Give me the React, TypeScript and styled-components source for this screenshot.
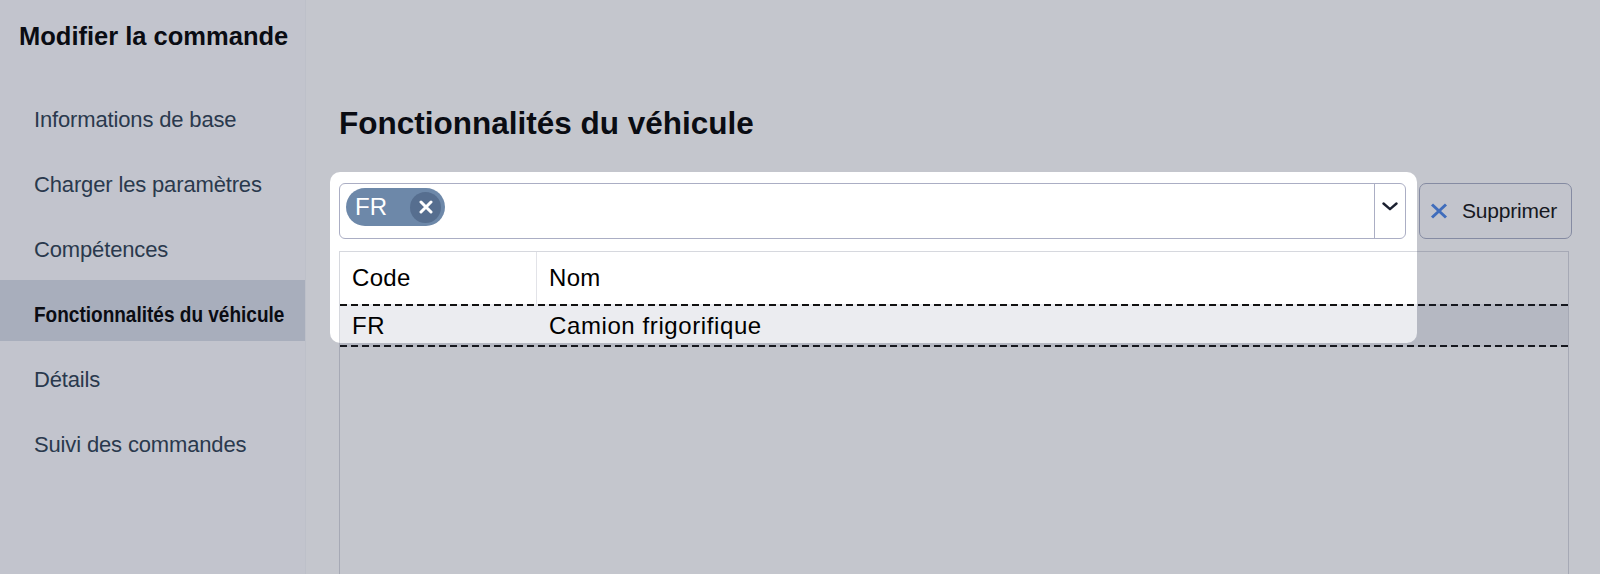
import React from "react";
import styled, { createGlobalStyle } from "styled-components";

const GlobalStyle = createGlobalStyle`
  html, body {
    margin: 0;
    padding: 0;
    height: 100%;
  }
  body {
    font-family: "Liberation Sans", Arial, Helvetica, sans-serif;
    background: #ffffff;
    overflow: hidden;
  }
  #root {
    height: 100%;
  }
`;

const Page = styled.div`
  display: flex;
  height: 100vh;
  overflow: hidden;
  background: #ffffff;
`;

const Sidebar = styled.aside`
  width: 306px;
  flex: none;
  box-sizing: border-box;
  padding-top: 21px;
  background: #fcfdff;
  border-right: 1px solid #f6f7fa;
`;

const SideTitle = styled.h1`
  margin: 0 0 34px 19px;
  font-size: 25.5px;
  line-height: 30px;
  font-weight: 700;
  color: #000000;
  white-space: nowrap;
`;

const Nav = styled.nav`
  display: flex;
  flex-direction: column;
  gap: 4px;
`;

const NavItem = styled.div<{ $active?: boolean }>`
  height: 61px;
  box-sizing: border-box;
  padding: 8px 0 0 34px;
  display: flex;
  align-items: center;
  white-space: nowrap;
  font-size: 22px;
  letter-spacing: -0.15px;
  font-weight: 400;
  color: #2c3e50;
  background: ${(p) => (p.$active ? "#d9dfe8" : "transparent")};
`;

const ActiveLabel = styled.span`
  display: inline-block;
  font-weight: 700;
  font-size: 22.5px;
  letter-spacing: 0;
  color: #000000;
  transform: scaleX(0.845);
  transform-origin: left center;
`;

const Main = styled.main`
  flex: 1;
  min-width: 0;
  box-sizing: border-box;
  padding: 105px 31px 0 33px;
  display: flex;
  flex-direction: column;
`;

const Heading = styled.h2`
  margin: 0 0 41px;
  font-size: 31.5px;
  line-height: 37px;
  font-weight: 700;
  color: #000000;
  white-space: nowrap;
`;

const Editor = styled.section`
  position: relative;
  flex: 1;
  display: flex;
  flex-direction: column;
  min-height: 0;
`;

const Toolbar = styled.div`
  display: flex;
  gap: 13px;
  height: 56px;
  margin-right: -3px;
`;

const Select = styled.div`
  flex: 1;
  display: flex;
  box-sizing: border-box;
  height: 56px;
  border: 1px solid #abaec4;
  border-radius: 6px;
  background: #ffffff;
`;

const SelectValues = styled.div`
  flex: 1;
  display: flex;
  align-items: flex-start;
  padding: 4px 6px;
`;

const Chip = styled.span`
  display: inline-flex;
  align-items: center;
  gap: 23px;
  height: 38px;
  box-sizing: border-box;
  padding: 0 4px 0 9px;
  border-radius: 19px;
  background: #6d88a9;
  color: #ffffff;
  font-size: 24px;
`;

const ChipClose = styled.span`
  width: 31px;
  height: 31px;
  border-radius: 50%;
  background: #566e8f;
  display: flex;
  align-items: center;
  justify-content: center;
`;

const ChevronBox = styled.div`
  width: 31px;
  flex: none;
  border-left: 1px solid #abaec4;
  display: flex;
  justify-content: center;
  padding-top: 18px;
  box-sizing: border-box;
`;

const DeleteButton = styled.button`
  width: 153px;
  height: 56px;
  flex: none;
  box-sizing: border-box;
  display: flex;
  align-items: center;
  gap: 14px;
  padding: 0 0 0 10px;
  border: 1px solid #a9aec4;
  border-radius: 7px;
  background: #fdfdfe;
  font-family: "Liberation Sans", Arial, sans-serif;
  font-size: 21px;
  letter-spacing: -0.2px;
  color: #111111;
`;

const Table = styled.div`
  flex: 1;
  margin-top: 12px;
  border: 1px solid #d6d8de;
  border-bottom: none;
  background: #ffffff;
  display: flex;
  flex-direction: column;
`;

const HeaderRow = styled.div`
  display: grid;
  grid-template-columns: 197px 1fr;
  height: 52px;
`;

const HeaderCell = styled.div<{ $divider?: boolean }>`
  display: flex;
  align-items: center;
  padding-left: 12px;
  font-size: 24px;
  letter-spacing: 0.3px;
  color: #000000;
  border-right: ${(p) => (p.$divider ? "1px solid #e2e3e8" : "none")};
`;

const DataRow = styled.div`
  display: grid;
  grid-template-columns: 197px 1fr;
  height: 43px;
  background-color: #ebecf0;
  background-image: repeating-linear-gradient(
      to right,
      #111111 0 7px,
      transparent 7px 11px
    ),
    repeating-linear-gradient(to right, #111111 0 7px, transparent 7px 11px);
  background-size: 100% 2px, 100% 2px;
  background-position: 0 0, 0 100%;
  background-repeat: no-repeat;
`;

const DataCell = styled.div`
  display: flex;
  align-items: center;
  padding-left: 12px;
  font-size: 24px;
  letter-spacing: 0.6px;
  color: #000000;
`;

const Spotlight = styled.div`
  position: absolute;
  left: -9px;
  top: -11px;
  width: 1087px;
  height: 171px;
  border-radius: 10px;
  box-shadow: 0 0 0 4000px rgba(38, 46, 70, 0.27);
  pointer-events: none;
  z-index: 10;
`;

const navItems = [
  "Informations de base",
  "Charger les paramètres",
  "Compétences",
  "Fonctionnalités du véhicule",
  "Détails",
  "Suivi des commandes",
];

const ACTIVE = "Fonctionnalités du véhicule";

export default function App() {
  return (
    <>
      <GlobalStyle />
      <Page>
        <Sidebar>
          <SideTitle>Modifier la commande</SideTitle>
          <Nav>
            {navItems.map((item) => (
              <NavItem key={item} $active={item === ACTIVE}>
                {item === ACTIVE ? <ActiveLabel>{item}</ActiveLabel> : item}
              </NavItem>
            ))}
          </Nav>
        </Sidebar>
        <Main>
          <Heading>Fonctionnalités du véhicule</Heading>
          <Editor>
            <Toolbar>
              <Select>
                <SelectValues>
                  <Chip>
                    FR
                    <ChipClose>
                      <svg width="14" height="14" viewBox="0 0 14 14">
                        <path
                          d="M2 2 L12 12 M12 2 L2 12"
                          stroke="#ffffff"
                          strokeWidth="3"
                          strokeLinecap="round"
                        />
                      </svg>
                    </ChipClose>
                  </Chip>
                </SelectValues>
                <ChevronBox>
                  <svg width="16" height="9" viewBox="0 0 16 9">
                    <path
                      d="M1.5 1.5 L8 7.2 L14.5 1.5"
                      fill="none"
                      stroke="#1b2030"
                      strokeWidth="2.4"
                      strokeLinecap="round"
                      strokeLinejoin="round"
                    />
                  </svg>
                </ChevronBox>
              </Select>
              <DeleteButton>
                <svg width="18" height="16" viewBox="0 0 18 16">
                  <path
                    d="M2 1.5 L16 14.5 M16 1.5 L2 14.5"
                    stroke="#4a86e8"
                    strokeWidth="3"
                  />
                </svg>
                Supprimer
              </DeleteButton>
            </Toolbar>
            <Table>
              <HeaderRow>
                <HeaderCell $divider>Code</HeaderCell>
                <HeaderCell>Nom</HeaderCell>
              </HeaderRow>
              <DataRow>
                <DataCell>FR</DataCell>
                <DataCell>Camion frigorifique</DataCell>
              </DataRow>
            </Table>
            <Spotlight />
          </Editor>
        </Main>
      </Page>
    </>
  );
}
